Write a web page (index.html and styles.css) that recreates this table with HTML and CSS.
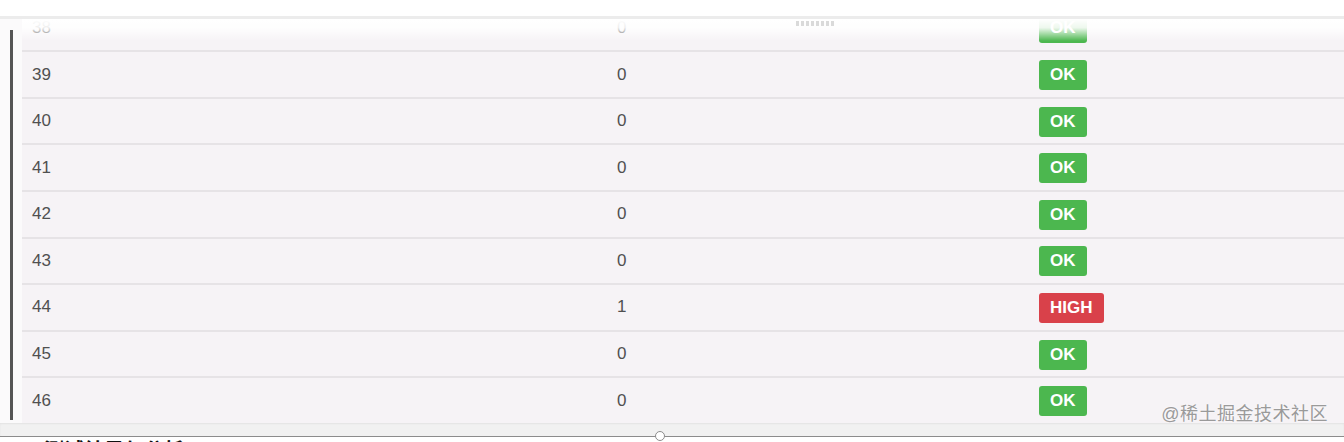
FILE: index.html
```html
<!DOCTYPE html>
<html lang="zh">
<head>
    <meta charset="UTF-8">
    <meta name="viewport" content="width=device-width, initial-scale=1.0">
    <title>检测结果</title>
    <link rel="stylesheet" href="styles.css">
</head>
<body>
    <div class="top-space"></div>

    <div class="panel">
        <div class="gutter">
            <div class="gutter-bar"></div>
        </div>

        <div class="scroll-area">
            <div class="scroll-shadow"></div>
            <div class="drag-handle"></div>

            <div class="table">
                <div class="row"><div class="cell">38</div><div class="cell">0</div><div class="cell"><span class="badge ok">OK</span></div></div>
                <div class="row"><div class="cell">39</div><div class="cell">0</div><div class="cell"><span class="badge ok">OK</span></div></div>
                <div class="row"><div class="cell">40</div><div class="cell">0</div><div class="cell"><span class="badge ok">OK</span></div></div>
                <div class="row"><div class="cell">41</div><div class="cell">0</div><div class="cell"><span class="badge ok">OK</span></div></div>
                <div class="row"><div class="cell">42</div><div class="cell">0</div><div class="cell"><span class="badge ok">OK</span></div></div>
                <div class="row"><div class="cell">43</div><div class="cell">0</div><div class="cell"><span class="badge ok">OK</span></div></div>
                <div class="row"><div class="cell">44</div><div class="cell">1</div><div class="cell"><span class="badge high">HIGH</span></div></div>
                <div class="row"><div class="cell">45</div><div class="cell">0</div><div class="cell"><span class="badge ok">OK</span></div></div>
                <div class="row"><div class="cell">46</div><div class="cell">0</div><div class="cell"><span class="badge ok">OK</span></div></div>
            </div>
        </div>
    </div>

    <div class="footer-band"></div>
    <div class="footer-line">
        <span class="footer-knob"></span>
    </div>
    <div class="next-title">三、测试结果与分析</div>

    <div class="watermark">@稀土掘金技术社区</div>
</body>
</html>
```

FILE: styles.css
```css
html, body {
    margin: 0;
    height: 100%;
    overflow: hidden;
}
body {
    position: relative;
    background: #ffffff;
    font-family: "Liberation Sans", Arial, "Noto Sans CJK SC", sans-serif;
}

.top-space {
    height: 16px;
}

/* основная панель с таблицей */
.panel {
    display: flex;
    height: 404px;
    border-top: 3px solid #ececec;
}
.gutter {
    width: 22px;
    flex-shrink: 0;
    background: #fbfafb;
}
.gutter-bar {
    width: 3px;
    height: 390px;
    margin-top: 11px;
    margin-left: 10px;
    background: #555555;
}
.scroll-area {
    flex: 1;
    position: relative;
    overflow: hidden;
    background: #f6f3f6;
}
.scroll-shadow {
    position: absolute;
    left: 0;
    right: 0;
    top: 0;
    height: 22px;
    background: linear-gradient(to bottom, #ffffff 0%, rgba(255, 255, 255, 0.9) 40%, rgba(246, 243, 246, 0) 100%);
    z-index: 2;
}
.drag-handle {
    position: absolute;
    top: 2px;
    left: 774px;
    width: 38px;
    height: 5px;
    background: repeating-linear-gradient(to right, #dadada 0 3px, transparent 3px 5px);
    z-index: 3;
}

.table {
    margin-top: -13.4px;
}
.row {
    display: grid;
    grid-template-columns: 585px 422px 1fr;
    align-items: center;
    height: 46.6px;
    box-sizing: border-box;
    border-bottom: 2px solid #e6e3e6;
    color: #505050;
    font-size: 17px;
}
.cell {
    padding-left: 10px;
}
.badge {
    display: inline-block;
    height: 30px;
    line-height: 30px;
    padding: 0 11px;
    border-radius: 3px;
    color: #ffffff;
    font-weight: 700;
    font-size: 17px;
    margin-top: 1px;
}
.badge.ok {
    background: #4cb74f;
}
.badge.high {
    background: #d9414a;
}

/* водяной знак поверх страницы */
.watermark {
    position: absolute;
    right: 16px;
    top: 402px;
    font-size: 18px;
    line-height: 24px;
    color: #9a9a9a;
    text-shadow: 0 0 2px #ffffff;
    letter-spacing: 0.5px;
    z-index: 5;
}

/* нижняя часть */
.footer-band {
    height: 13px;
    background: #f1f1f1;
    box-shadow: inset 0 1px 2px rgba(0, 0, 0, 0.06);
}
.footer-line {
    position: relative;
    height: 1px;
    background: #8c8c8c;
}
.footer-knob {
    position: absolute;
    left: 655px;
    top: -5px;
    width: 8px;
    height: 8px;
    border: 1px solid #8c8c8c;
    border-radius: 50%;
    background: #ffffff;
}
.next-title {
    padding: 3px 0 0 4px;
    font-size: 20px;
    font-weight: 700;
    color: #111111;
    line-height: 20px;
    font-family: "Noto Sans CJK SC", sans-serif;
}
```
